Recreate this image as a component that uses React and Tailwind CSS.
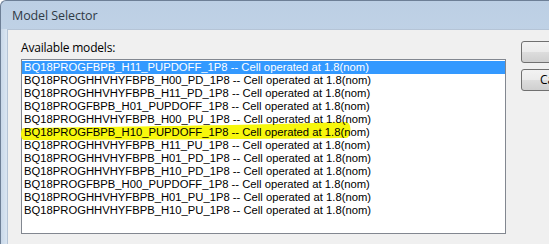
import React from "react";

const rows = [
  "BQ18PROGFBPB_H11_PUPDOFF_1P8 -- Cell operated at 1.8(nom)",
  "BQ18PROGHHVHYFBPB_H00_PD_1P8 -- Cell operated at 1.8(nom)",
  "BQ18PROGHHVHYFBPB_H11_PD_1P8 -- Cell operated at 1.8(nom)",
  "BQ18PROGFBPB_H01_PUPDOFF_1P8 -- Cell operated at 1.8(nom)",
  "BQ18PROGHHVHYFBPB_H00_PU_1P8 -- Cell operated at 1.8(nom)",
  "BQ18PROGFBPB_H10_PUPDOFF_1P8 -- Cell operated at 1.8(nom)",
  "BQ18PROGHHVHYFBPB_H11_PU_1P8 -- Cell operated at 1.8(nom)",
  "BQ18PROGHHVHYFBPB_H01_PD_1P8 -- Cell operated at 1.8(nom)",
  "BQ18PROGHHVHYFBPB_H10_PD_1P8 -- Cell operated at 1.8(nom)",
  "BQ18PROGFBPB_H00_PUPDOFF_1P8 -- Cell operated at 1.8(nom)",
  "BQ18PROGHHVHYFBPB_H01_PU_1P8 -- Cell operated at 1.8(nom)",
  "BQ18PROGHHVHYFBPB_H10_PU_1P8 -- Cell operated at 1.8(nom)",
];

function Button({ label }) {
  return (
    <div className="h-[22px] w-[75px] shrink-0 rounded-[3px] border border-[#707070] bg-[linear-gradient(#f2f2f2_0%,#ebebeb_50%,#dddddd_51%,#cfcfcf_100%)] flex items-center justify-center text-[12px] text-black font-['Open_Sans',sans-serif] whitespace-nowrap">
      {label}
    </div>
  );
}

export default function App() {
  return (
    <div className="w-[549px] h-[244px] overflow-hidden flex flex-col bg-[linear-gradient(180deg,#bccfe4_0%,#cddcec_60%,#d9e5f1_100%)] rounded-tl-[6px] border-l border-t border-[#6d7f96]">
      <div className="h-[28px] shrink-0 flex items-center pl-[11px] pt-[2px] text-[12.5px] text-[#2f3a46] font-['Open_Sans',sans-serif] tracking-[-0.1px]">
        Model Selector
      </div>
      <div className="flex flex-1 min-h-0">
        <div className="w-[6px] shrink-0 bg-[linear-gradient(90deg,#c9d8e9,#dae6f2)]" />
        <div className="flex-1 min-w-0 bg-[#f0f0f0] border-l border-t border-[#b5c4d6] flex">
          <div className="pl-[13px] pt-[10px] flex flex-col shrink-0">
            <div className="h-[19px] text-[12px] leading-[16px] text-black font-['Open_Sans',sans-serif] tracking-[-0.2px]">
              Available models:
            </div>
            <div className="relative w-[485px] h-[175px] bg-white border border-[#828790] pt-[1px] font-['Liberation_Sans',sans-serif] text-[11.25px] leading-[13px] text-black">
              <svg className="absolute left-[-1px] top-[62px]" width="332" height="20" viewBox="0 0 332 20">
                <path d="M3 6 C 80 5, 250 3, 325 0 C 331 0, 331 15, 325 16 C 250 17, 80 18, 3 18 C -1 18, -1 6, 3 6 Z" fill="#f7f70c" />
              </svg>
              {rows.map((r, i) => (
                <div
                  key={i}
                  className={
                    i === 0
                      ? "relative h-[13px] pl-[2px] bg-[#3399ff] text-white whitespace-nowrap"
                      : "relative h-[13px] pl-[2px] whitespace-nowrap"
                  }
                >
                  {r}
                </div>
              ))}
            </div>
          </div>
          <div className="ml-[15px] pt-[11px] flex flex-col gap-[6px] shrink-0">
            <Button label="OK" />
            <Button label="Cancel" />
          </div>
        </div>
      </div>
    </div>
  );
}
